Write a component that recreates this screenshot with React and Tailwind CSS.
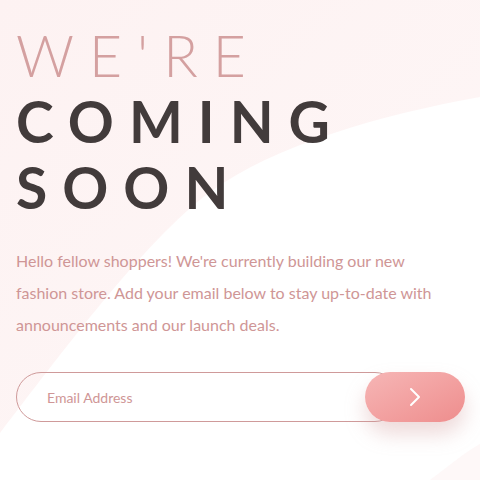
import { ChevronRight } from "lucide-react";

const FONT = "font-['Lato','Noto_Sans',sans-serif]";

const Backdrop = () => (
  <svg
    className="pointer-events-none absolute inset-0 h-full w-full"
    viewBox="0 0 480 480"
    preserveAspectRatio="none"
  >
    <defs>
      <linearGradient id="blush" x1="0" y1="0" x2="1" y2="1">
        <stop offset="0" stopColor="#fdf2f2" />
        <stop offset="1" stopColor="#fef7f7" />
      </linearGradient>
    </defs>
    <path
      d="M0 0 H480 V97 C380 115 275 145 210 192 C145 240 60 355 0 433 Z"
      fill="url(#blush)"
    />
    <path d="M430 480 C450 465 465 452 480 444 V480 Z" fill="#fef8f8" />
  </svg>
);

export default function App() {
  return (
    <div className={`relative h-[480px] w-[480px] overflow-hidden bg-white ${FONT}`}>
      <Backdrop />
      <main className="relative pl-4 pr-[15px] pt-[22px]">
        <h1 className="text-[57px] uppercase leading-[66px] tracking-[15px]">
          <span className="block font-light text-[#d4a0a0]">We're</span>
          <span className="block font-bold text-[#423b3b]">Coming</span>
          <span className="block font-bold text-[#423b3b]">Soon</span>
        </h1>

        <p className="mt-[25px] w-[440px] text-[16px] leading-8 text-[#cf9696]">
          Hello fellow shoppers! We're currently building our new fashion store.
          Add your email below to stay up-to-date with announcements and our
          launch deals.
        </p>

        <form className="mt-[31px] flex items-center" onSubmit={(e) => e.preventDefault()}>
          <input
            type="email"
            placeholder="Email Address"
            className="h-[50px] flex-1 rounded-full border border-[#cf9a9a] bg-transparent pl-[30px] text-[14px] text-[#cf9696] outline-none placeholder:text-[#cf9696]"
          />
          <button
            type="submit"
            className="-ml-[35px] flex h-[50px] w-[100px] items-center justify-center rounded-full bg-linear-to-br from-[#f6b6b6] to-[#ee8d8d] shadow-[0_12px_20px_rgba(206,150,150,0.35)]"
          >
            <ChevronRight className="h-8 w-8 text-white" strokeWidth={1.5} />
          </button>
        </form>
      </main>
    </div>
  );
}
